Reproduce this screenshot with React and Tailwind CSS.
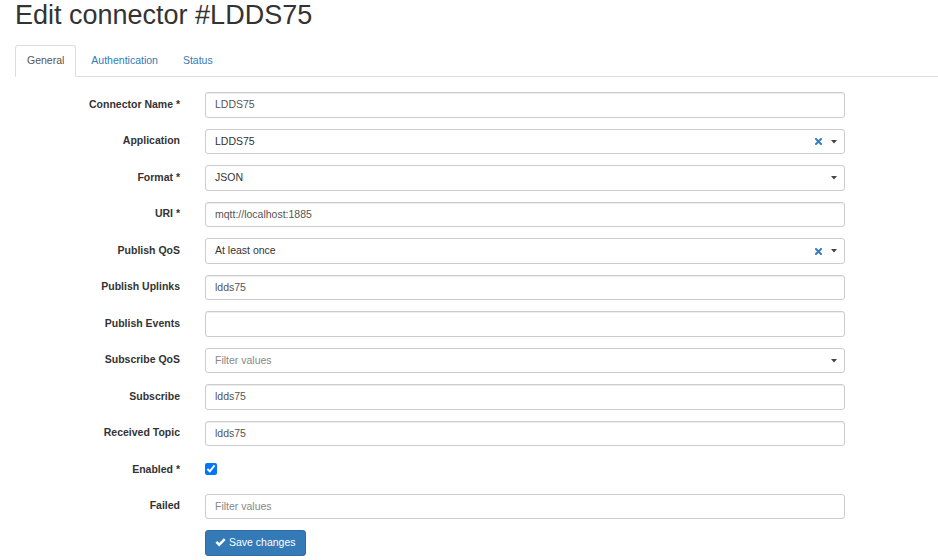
import React from 'react';

const rows = [
  { label: 'Connector Name *', type: 'text', value: 'LDDS75' },
  { label: 'Application', type: 'select', value: 'LDDS75', clear: true },
  { label: 'Format *', type: 'select', value: 'JSON' },
  { label: 'URI *', type: 'text', value: 'mqtt://localhost:1885' },
  { label: 'Publish QoS', type: 'select', value: 'At least once', clear: true },
  { label: 'Publish Uplinks', type: 'text', value: 'ldds75' },
  { label: 'Publish Events', type: 'text', value: '' },
  { label: 'Subscribe QoS', type: 'select', placeholder: 'Filter values' },
  { label: 'Subscribe', type: 'text', value: 'ldds75' },
  { label: 'Received Topic', type: 'text', value: 'ldds75' },
  { label: 'Enabled *', type: 'checkbox' },
  { label: 'Failed', type: 'multi', placeholder: 'Filter values' },
];

function Caret() {
  return (
    <svg width="6" height="4" viewBox="0 0 6 4" className="ml-[9px]">
      <path d="M0 0 L6 0 L3 3.5 Z" fill="#444" />
    </svg>
  );
}

function ClearX() {
  return (
    <svg width="7" height="7" viewBox="0 0 7 7">
      <path d="M1 1 L6 6 M6 1 L1 6" stroke="#3a7cc0" strokeWidth="2" strokeLinecap="square" />
    </svg>
  );
}

function Control({ row }) {
  if (row.type === 'checkbox') {
    return (
      <input type="checkbox" defaultChecked className="w-[12px] h-[12px] m-0 accent-[#0075ff]" />
    );
  }
  if (row.type === 'text') {
    return (
      <div className="w-[640px] h-[25.5px] border border-[#ccc] rounded-[3px] px-[9px] pt-[1px] flex items-center text-[10.5px] text-[#555] shadow-[inset_0_1px_1px_rgba(0,0,0,0.075)]">
        {row.value}
      </div>
    );
  }
  return (
    <div className="w-[640px] h-[25.5px] border border-[#ccc] rounded-[3px] pl-[9px] pr-[7px] pt-[1px] flex items-center text-[10.5px]">
      <span className={row.value ? 'text-[#333]' : 'text-[#888]'}>{row.value || row.placeholder}</span>
      <div className="ml-auto flex items-center">
        {row.clear && <ClearX />}
        {row.type === 'select' && <Caret />}
      </div>
    </div>
  );
}

export default function App() {
  return (
    <div className="w-[938px] h-[560px] bg-white overflow-hidden font-['Liberation_Sans',Arial,sans-serif] text-[#333]">
      <div className="pl-[15px]">
        <h1 className="text-[27px] leading-[30px] font-normal text-[#333] mb-[15px]">Edit connector #LDDS75</h1>

        {/* Tabs */}
        <div className="flex border-b border-[#ddd] h-[32px] text-[10.5px]">
          <div className="h-[32px] px-[11px] flex items-center bg-white border border-[#ddd] border-b-white rounded-t-[3px] text-[#555]">
            General
          </div>
          <div className="h-[31px] px-[15px] flex items-center text-[#337ab7]">Authentication</div>
          <div className="h-[31px] px-[10px] flex items-center text-[#337ab7]">Status</div>
        </div>
      </div>

      {/* Form */}
      <div className="pt-[15px]">
        {rows.map((row) => (
          <div key={row.label} className="flex items-center h-[25.5px] mb-[11px]">
            <div className="w-[180px] text-right font-bold text-[10.5px] text-[#333]">{row.label}</div>
            <div className="ml-[25px]">
              <Control row={row} />
            </div>
          </div>
        ))}
        <div className="flex">
          <div className="w-[180px]" />
          <button className="ml-[25px] h-[25.5px] px-[9px] flex items-center gap-[3px] bg-[#337ab7] border border-[#2e6da4] rounded-[3px] text-white text-[10.5px]">
            <svg width="11" height="9" viewBox="0 0 11 9">
              <path d="M0.5 4.8 L2.3 3.1 L4.2 5 L8.9 0.3 L10.6 2 L4.2 8.4 Z" fill="white" />
            </svg>
            Save changes
          </button>
        </div>
      </div>
    </div>
  );
}
